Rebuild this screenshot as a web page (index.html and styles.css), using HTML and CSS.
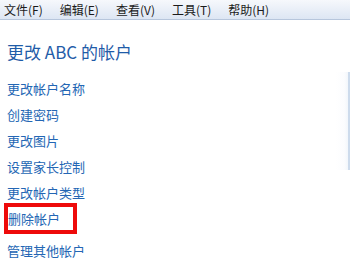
FILE: index.html
```html
<!DOCTYPE html>
<html lang="zh-CN">
<head>
    <meta charset="UTF-8">
    <title>更改 ABC 的帐户</title>
    <link rel="stylesheet" href="styles.css">
</head>
<body>
    <div class="menubar">
        <span>文件(F)</span>
        <span>编辑(E)</span>
        <span>查看(V)</span>
        <span>工具(T)</span>
        <span>帮助(H)</span>
    </div>
    <div class="page">
        <div class="main">
            <h2>更改 ABC 的帐户</h2>
            <ul class="tasks">
                <li><a href="#">更改帐户名称</a></li>
                <li><a href="#">创建密码</a></li>
                <li><a href="#">更改图片</a></li>
                <li><a href="#">设置家长控制</a></li>
                <li><a href="#">更改帐户类型</a></li>
                <li><a href="#" class="mark">删除帐户</a></li>
                <li class="other"><a href="#">管理其他帐户</a></li>
            </ul>
        </div>
        <div class="edge"></div>
    </div>
</body>
</html>
```

FILE: styles.css
```css
body { margin: 0; width: 350px; height: 260px; overflow: hidden; background: #fff;
    font-family: "Noto Sans CJK SC", "Microsoft YaHei", sans-serif; }
.menubar { height: 19px; line-height: 19px; font-size: 12px; color: #1b1b1b; display: flex; gap: 17px; padding-left: 4px;
    background: linear-gradient(#f6f8fc, #dde6f3); border-bottom: 1px solid #b7c6dc; }
.page { display: flex; }
.main { flex: 1; }
h2 { margin: 20px 0 0 7px; font-size: 17px; line-height: 24px; font-weight: normal; color: #1f5ca8; }
.tasks { list-style: none; margin: 12px 0 0; padding: 0 0 0 7px; font-size: 13px; line-height: 26px; }
.tasks a { color: #2366b4; text-decoration: none; }
.tasks .other { margin-top: 6px; }
.mark { display: inline-block; width: 65px; line-height: 23px; margin-left: 1px;
    outline: 4px solid #ee0a0a; }
.edge { width: 14px; height: 98px; margin-top: 52px;
    background: linear-gradient(90deg, #fff, #fbfcfe 70%, #f2f6fb); border-right: 2px solid #cddbec; box-sizing: border-box; }
```
